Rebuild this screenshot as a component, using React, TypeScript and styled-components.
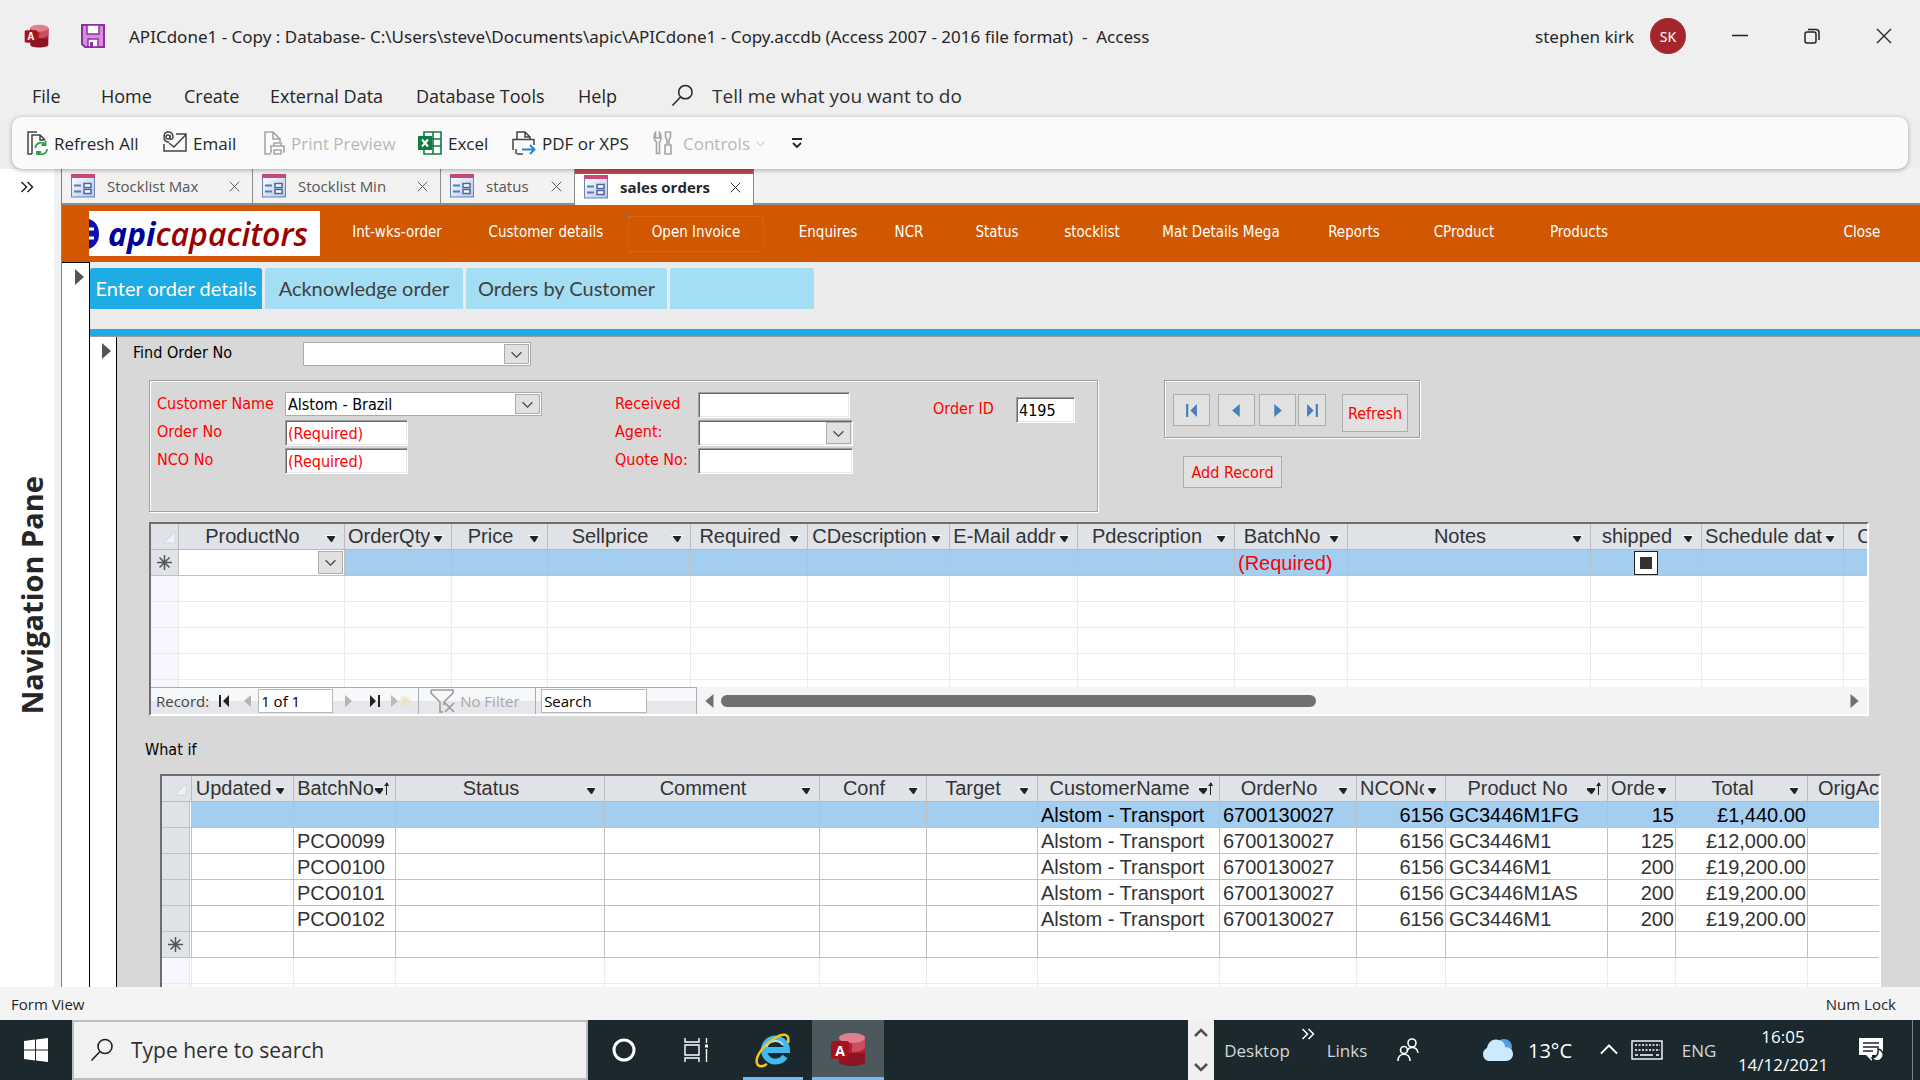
import React from "react";
import styled, { createGlobalStyle, css } from "styled-components";

const ui = `"Open Sans", "Noto Sans", sans-serif`;
const form = `"DejaVu Sans Condensed", "DejaVu Sans", sans-serif`;
const sheet = `"Liberation Sans", Arial, sans-serif`;

const Global = createGlobalStyle`
  * { box-sizing: border-box; }
  html, body { margin: 0; }
  body { font-family: ${ui}; color: #262626; background: #efefef; }
  button, input, select { font: inherit; color: inherit; margin: 0; border-radius: 0; }
  button { background: none; border: 0; padding: 0; cursor: pointer; white-space: nowrap; }
  a { color: inherit; text-decoration: none; }
  svg { display: block; flex: none; }
`;

const Window = styled.div`
  display: flex;
  flex-direction: column;
  height: 100vh;
  overflow: hidden;
`;

/* ---------- title bar and ribbon ---------- */

const TitleBar = styled.header`
  display: flex;
  align-items: center;
  flex: none;
  height: 72px;
  padding-left: 24px;
  font-family: "Noto Sans", "Open Sans", sans-serif;
  font-size: 17px;
`;
const SaveButton = styled.button`
  margin: 0 24px 0 32px;
`;
const Title = styled.h1`
  margin: 0;
  font-size: 17px;
  font-weight: 400;
  white-space: pre;
`;
const Account = styled.div`
  display: flex;
  align-items: center;
  gap: 16px;
  margin-left: auto;
  margin-right: 18px;
`;
const Avatar = styled.span`
  display: grid;
  place-items: center;
  width: 36px;
  height: 36px;
  border-radius: 50%;
  background: #a4262c;
  color: #fff;
  font-size: 14px;
`;
const WindowButton = styled.button`
  display: grid;
  place-items: center;
  width: 72px;
  height: 48px;
`;

const MenuBar = styled.nav`
  display: flex;
  align-items: center;
  flex: none;
  height: 45px;
  padding: 2px 0 0 32px;
  font-size: 18px;
`;
const MenuItem = styled.button<{ $w: number }>`
  width: ${(p) => p.$w}px;
  text-align: left;
`;
const TellMe = styled.label`
  display: flex;
  align-items: center;
  gap: 18px;
  font-size: 19px;
`;
const PlainInput = styled.input`
  border: 0;
  outline: 0;
  padding: 0;
  background: transparent;
  width: 340px;
  &::placeholder { color: #303030; opacity: 1; }
`;

const Ribbon = styled.div`
  display: flex;
  align-items: center;
  flex: none;
  height: 52px;
  margin: 0 12px;
  padding-left: 15px;
  border-radius: 10px;
  background: #fafafa;
  box-shadow: 0 1px 5px rgba(0, 0, 0, 0.32);
  font-size: 17px;
  position: relative;
  z-index: 1;
`;
const RibbonButton = styled.button<{ $w: number }>`
  display: flex;
  align-items: center;
  gap: 6px;
  width: ${(p) => p.$w}px;
  &:disabled { color: #b8b8b8; }
`;

/* ---------- workspace ---------- */

const Workspace = styled.main`
  display: flex;
  flex: 1;
  min-height: 0;
  background: #fff;
`;
const NavPane = styled.aside`
  display: flex;
  flex-direction: column;
  flex: none;
  width: 61px;
  border-right: 7px solid #f0f1f3;
`;
const PaneToggle = styled.button`
  height: 36px;
  display: grid;
  place-items: center;
`;
const PaneTitle = styled.h2`
  writing-mode: vertical-rl;
  transform: rotate(180deg);
  margin: auto 0 auto 13px;
  padding-top: 2px;
  font-size: 29px;
  line-height: 38px;
  font-weight: 700;
  white-space: nowrap;
`;
const Documents = styled.div`
  display: flex;
  flex-direction: column;
  flex: 1;
  min-width: 0;
  border-left: 1px solid #80858c;
`;
const DocTabs = styled.div`
  display: flex;
  flex: none;
  height: 36px;
  background: #f3f2f1;
  border-bottom: 2px solid #8a8f96;
`;
const DocTab = styled.div<{ $w: number; $on?: boolean }>`
  display: flex;
  align-items: center;
  width: ${(p) => p.$w}px;
  padding: 0 12px 0 9px;
  border-right: 1px solid #8a8f96;
  font-size: 15px;
  color: #555;
  ${(p) =>
    p.$on &&
    css`
      height: 36px;
      background: #fff;
      border-top: 5px solid #bc4b52;
      padding-bottom: 5px;
      color: #262626;
      font-weight: 700;
    `}
`;
const TabName = styled.button`
  flex: 1;
  padding-left: 12px;
  text-align: left;
  font-weight: inherit;
`;

const Banner = styled.nav`
  display: grid;
  grid-template-columns: 258px 154px 144px 156px 108px 54px 122px 68px 190px 76px 144px 86px 1fr 116px;
  align-items: center;
  flex: none;
  height: 57px;
  background: #d15700;
  color: #fff;
  font-family: ${form};
  font-size: 15px;
`;
const Logo = styled.div`
  display: flex;
  align-items: center;
  width: 231px;
  height: 45px;
  margin-left: 27px;
  background: #fff;
  font: italic 600 32px/40px "Open Sans", "Noto Sans", sans-serif;
  color: #990000;
  overflow: hidden;
`;
const LogoBlue = styled.span`
  color: #00009c;
  font-weight: 700;
  margin-left: 8px;
`;
const BannerButton = styled.button<{ $focus?: boolean }>`
  justify-self: center;
  height: 36px;
  padding-bottom: 4px;
  ${(p) =>
    p.$focus &&
    css`
      width: 136px;
      border: 1px dotted #3d9bd0;
    `}
`;

const MainForm = styled.div`
  display: flex;
  flex: 1;
  min-height: 0;
`;
const Selector = styled.div<{ $w: number; $top?: boolean }>`
  flex: none;
  width: ${(p) => p.$w}px;
  padding: 6px 5px 0 0;
  display: flex;
  align-items: flex-start;
  justify-content: flex-end;
  background: #fff;
  border-right: 1px solid #000;
  border-top: ${(p) => (p.$top ? "1px solid #000" : "0")};
`;
const Column = styled.div`
  display: flex;
  flex-direction: column;
  flex: 1;
  min-width: 0;
  min-height: 0;
`;
const FormTabs = styled.div`
  display: flex;
  gap: 3px;
  flex: none;
  height: 75px;
  padding-top: 6px;
  background: #ebebeb;
  border-bottom: 1px solid #9c9c9c;
  box-shadow: inset 0 -7px #1eace5;
`;
const FormTab = styled.button<{ $w: number; $on?: boolean }>`
  width: ${(p) => p.$w}px;
  height: 41px;
  padding-bottom: 2px;
  border-radius: 3px 3px 0 0;
  background: ${(p) => (p.$on ? "#1eace5" : "#a4def4")};
  color: ${(p) => (p.$on ? "#fff" : "#404040")};
  font: 20px/24px Lato, "Open Sans", sans-serif;
`;
const Detail = styled.div`
  display: flex;
  flex-direction: column;
  flex: 1;
  min-width: 0;
  min-height: 0;
  padding: 5px 39px 0 32px;
  background: #d8d8d8;
  font-family: ${form};
  font-size: 16px;
  color: #000;
`;

/* ---------- form controls ---------- */

const FindRow = styled.div`
  display: flex;
  flex: none;
  margin-left: -16px;
  height: 24px;
`;
const Label = styled.label<{ $w: number; $red?: boolean }>`
  width: ${(p) => p.$w}px;
  line-height: ${(p) => (p.$red ? 23 : 21)}px;
  white-space: nowrap;
  color: ${(p) => (p.$red ? "#f00" : "#000")};
`;
const sunken = css`
  border: 1px solid;
  border-color: #a0a0a0 #fff #fff #a0a0a0;
  box-shadow: inset 1px 1px #696969, inset -1px -1px #e8e8e8;
`;
const ComboBox = styled.div<{ $w: number; $flat?: boolean }>`
  position: relative;
  width: ${(p) => p.$w}px;
  height: ${(p) => (p.$flat ? 24 : 26)}px;
  background: #fff;
  ${(p) => (p.$flat ? "border: 1px solid #ababb5;" : sunken)}
  select {
    appearance: none;
    display: block;
    width: 100%;
    height: 100%;
    padding: 0 28px 0 2px;
    border: 0;
    outline: 0;
    background: transparent;
  }
`;
const ComboArrow = styled.span`
  position: absolute;
  top: 1px;
  right: 1px;
  bottom: 1px;
  width: 25px;
  display: grid;
  place-items: center;
  background: #e1e1e1;
  border: 1px solid #adadad;
  color: #444;
  pointer-events: none;
`;
const TextBox = styled.input<{ $w: number; $red?: boolean }>`
  width: ${(p) => p.$w}px;
  height: 26px;
  padding: 0 2px;
  outline: 0;
  background: #fff;
  ${sunken}
  color: ${(p) => (p.$red ? "#f00" : "#000")};
`;
const TopRow = styled.div`
  display: flex;
  flex: none;
  gap: 66px;
  margin-top: 14px;
`;
const etched = css`
  border: 1px solid #a0a0a0;
  box-shadow: inset 1px 1px #fff, 1px 1px #fff;
`;
const OrderPanel = styled.section`
  display: flex;
  width: 949px;
  height: 132px;
  padding: 11px 7px;
  ${etched}
`;
const FieldGroup = styled.div<{ $w: number; $low?: boolean }>`
  display: flex;
  flex-direction: column;
  gap: 2px;
  width: ${(p) => p.$w}px;
  padding-top: ${(p) => (p.$low ? 5 : 0)}px;
`;
const Field = styled.div`
  display: flex;
  height: 26px;
`;
const Actions = styled.div`
  display: flex;
  flex-direction: column;
  align-items: flex-start;
`;
const RecordPanel = styled.div`
  display: flex;
  align-items: flex-start;
  width: 256px;
  height: 58px;
  padding: 13px 8px;
  ${etched}
`;
const FormButton = styled.button<{ $w: number; $h: number; $gap?: number }>`
  display: grid;
  place-items: center;
  width: ${(p) => p.$w}px;
  height: ${(p) => p.$h}px;
  margin-right: ${(p) => p.$gap || 0}px;
  background: #e1e1e1;
  border: 1px solid #adadad;
  color: #f00;
`;
const AddRow = styled.div`
  padding: 18px 19px 0;
`;

/* ---------- datasheets ---------- */

const SheetFrame = styled.section<{ $fill?: boolean }>`
  display: flex;
  flex-direction: column;
  min-width: 0;
  background: #fff;
  border: 2px solid;
  border-color: #6e6e6e #fff #fff #6e6e6e;
  ${(p) =>
    p.$fill
      ? "flex: 1; min-height: 0; margin-left: 11px; border-bottom: 0;"
      : "flex: none; margin: 10px 12px 0 0;"}
`;
const SheetView = styled.div<{ $h?: number }>`
  overflow: hidden;
  ${(p) => (p.$h ? `height: ${p.$h}px;` : "flex: 1; min-height: 0;")}
`;
const Sheet = styled.table<{ $w: number }>`
  table-layout: fixed;
  width: ${(p) => p.$w}px;
  border-collapse: separate;
  border-spacing: 0;
  font-family: ${sheet};
  font-size: 20px;
  line-height: 25px;
  color: #333;
`;
const Col = styled.col<{ $w: number }>`
  width: ${(p) => p.$w}px;
`;
const Row = styled.tr<{ $kind?: "current" | "empty" }>`
  height: 26px;
  line-height: 23px;
  color: ${(p) => (p.$kind === "current" ? "#000" : "#333")};
  background: ${(p) => (p.$kind === "current" ? "#a4cef0" : "#fff")};
  --line: ${(p) => (p.$kind === "empty" ? "#ebebeb" : "#c0c0c0")};
`;
const HeadCell = styled.th`
  height: 26px;
  padding: 0;
  font-weight: 400;
  background: #dfe2e7;
  border: solid #b8bcc2;
  border-width: 0 1px 1px 0;
`;
const HeadInner = styled.div`
  display: flex;
  align-items: center;
  height: 25px;
  padding: 0 5px 0 3px;
`;
const HeadText = styled.span`
  flex: 1;
  min-width: 0;
  overflow: hidden;
  white-space: nowrap;
  text-align: center;
`;
const Cell = styled.td<{ $num?: boolean; $red?: boolean }>`
  height: 26px;
  padding: 2px 1px 0 3px;
  overflow: hidden;
  white-space: nowrap;
  text-align: ${(p) => (p.$num ? "right" : "left")};
  border: solid var(--line);
  border-width: 0 1px 1px 0;
  ${(p) => p.$red && "color: #f00;"}
`;
const RowHead = styled.th<{ $blank?: boolean }>`
  height: 26px;
  padding: 0;
  background: ${(p) => (p.$blank ? "#f7f7ff" : "#dfe2e7")};
  border: solid var(--line);
  border-width: 0 1px 1px 0;
  svg { margin: 0 auto; }
`;
const ComboCell = styled.td`
  height: 26px;
  padding: 0;
  background: #fff;
  border: solid var(--line);
  border-width: 0 1px 1px 0;
`;
const CellCombo = styled(ComboBox)`
  border: 0;
  box-shadow: none;
  height: 25px;
`;
const CheckCell = styled(Cell)`
  padding: 0;
`;
const CheckBox = styled.input`
  appearance: none;
  display: block;
  width: 24px;
  height: 24px;
  margin: 0 auto;
  border: 1px solid #222;
  background: #333 content-box;
  padding: 5px;
  box-shadow: inset 0 0 0 5px #fff;
`;
const RecordBar = styled.div`
  display: flex;
  height: 27px;
  background: #f4f4f4;
  font-family: ${ui};
  font-size: 15px;
  color: #444;
`;
const RecordNav = styled.div`
  display: flex;
  align-items: center;
  flex: none;
  width: 546px;
  border: solid #a9adb3;
  border-width: 1px 1px 0 0;
  background: linear-gradient(#f7f8f9 50%, #e6e7eb 50%);
  padding-left: 5px;
`;
const NavIcon = styled.button<{ $w: number }>`
  display: grid;
  place-items: center;
  width: ${(p) => p.$w}px;
  height: 24px;
`;
const BarInput = styled.input<{ $w: number }>`
  width: ${(p) => p.$w}px;
  height: 24px;
  padding: 0 2px;
  border: 1px solid #b5b8bd;
  background: #fff;
  color: #000;
  &::placeholder { color: #000; opacity: 1; }
`;
const FilterButton = styled.button`
  display: flex;
  align-items: center;
  gap: 4px;
  width: 118px;
  height: 26px;
  margin: 0 5px 0 4px;
  padding-left: 11px;
  border: solid #a9adb3;
  border-width: 0 1px;
  &:disabled { color: #a6a8ac; }
`;
const Scroll = styled.div`
  display: flex;
  align-items: center;
  flex: 1;
  padding: 0 6px;
  gap: 4px;
`;
const Track = styled.div`
  flex: 1;
`;
const Thumb = styled.div`
  width: 53%;
  height: 12px;
  border-radius: 6px;
  background: #707070;
`;
const WhatIf = styled.h3`
  flex: none;
  margin: 0 -4px;
  padding-top: 23px;
  height: 58px;
  font-size: 16px;
  line-height: 21px;
  font-weight: 400;
`;

/* ---------- status bar and taskbar ---------- */

const StatusBar = styled.footer`
  display: flex;
  align-items: center;
  justify-content: space-between;
  flex: none;
  height: 33px;
  padding: 0 24px 0 11px;
  background: #f4f4f4;
  font-size: 15px;
`;
const Taskbar = styled.footer`
  display: flex;
  align-items: stretch;
  flex: none;
  height: 60px;
  background: #1b292e;
  color: #fff;
  font-size: 17px;
`;
const TaskButton = styled.button<{ $w: number; $on?: boolean }>`
  display: grid;
  place-items: center;
  width: ${(p) => p.$w}px;
  ${(p) => p.$on && "background: #4c585c;"}
`;
const Running = styled(TaskButton)`
  box-shadow: inset 0 -3px #76b9ed;
`;
const TaskGap = styled.span<{ $w: number }>`
  width: ${(p) => p.$w}px;
`;
const SearchBox = styled.label`
  display: flex;
  align-items: center;
  gap: 17px;
  width: 516px;
  padding-left: 16px;
  background: #f2f2f2;
  border: 2px solid #bdbdbd;
  color: #222;
  font-size: 21px;
`;
const Spinner = styled.div`
  display: flex;
  flex-direction: column;
  justify-content: space-between;
  width: 26px;
  margin-left: auto;
  padding: 8px 5px;
  background: #f0f0f0;
`;
const TrayText = styled.button<{ $w: number }>`
  width: ${(p) => p.$w}px;
  color: #d4d7d8;
`;
const More = styled.button`
  align-self: flex-start;
  width: 26px;
  padding: 8px 1px;
`;
const Weather = styled.button`
  display: flex;
  align-items: center;
  gap: 14px;
  width: 106px;
  margin-left: 32px;
  font-size: 20px;
`;
const Clock = styled.time`
  width: 96px;
  padding-top: 3px;
  line-height: 28px;
  text-align: center;
`;
const ShowDesktop = styled.button`
  width: 8px;
  margin-left: 1px;
  border-left: 1px solid #7b8487;
`;

/* ---------- icons ---------- */

const AccessIcon = ({ size }: { size: number }) => (
  <svg width={size} height={size} viewBox="0 0 36 36">
    <path d="M9 6v24c0 2.500 5.800 4 13 4s13-1.500 13-4V6z" fill="#8b1621" />
    <path d="M9 6v15h26V6z" fill="#b3202f" />
    <path d="M22 6h13v9c0 3-6 5-13 5z" fill="#c94f60" />
    <ellipse cx="22" cy="6" rx="13" ry="5" fill="#e07f8e" />
    <rect x="1" y="9" width="18" height="18" rx="2" fill="#a4121f" />
    <text x="10" y="23.500" textAnchor="middle" fontFamily="Open Sans" fontWeight="700" fontSize="14" fill="#fff">A</text>
  </svg>
);
const SaveIcon = () => (
  <svg width="24" height="24" viewBox="0 0 24 24">
    <path d="M1 1h22v22H4l-3-3z" fill="#d58ddc" stroke="#8d2fa0" strokeWidth="2" />
    <path d="M6 1h12v9H6z" fill="#fff" stroke="#8d2fa0" strokeWidth="1.500" />
    <path d="M7 23v-8h10v8z" fill="#fff" stroke="#8d2fa0" strokeWidth="1.500" />
    <path d="M9 18h3v5H9z" fill="#8d2fa0" />
  </svg>
);
const Glass = ({ size }: { size: number }) => (
  <svg width={size} height={size} viewBox="0 0 24 24" fill="none" stroke="currentColor" strokeWidth="1.600">
    <circle cx="15" cy="8.500" r="7" />
    <path d="M10 13.500L1.500 22.500" />
  </svg>
);
const Chevron = ({ size = 10, up }: { size?: number; up?: boolean }) => (
  <svg width={size} height={size} viewBox="0 0 10 10" fill="none" stroke="currentColor" strokeWidth="1.100">
    <path d={up ? "M0.500 7L5 2.500L9.500 7" : "M0.500 3L5 7.500L9.500 3"} />
  </svg>
);
const DoubleChevron = () => (
  <svg width="14" height="12" viewBox="0 0 14 12" fill="none" stroke="currentColor" strokeWidth="1.500">
    <path d="M1.500 1l5 5-5 5M7.500 1l5 5-5 5" />
  </svg>
);
const Cross = ({ size }: { size: number }) => (
  <svg width={size} height={size} viewBox="0 0 16 16" stroke="currentColor" strokeWidth="1.400">
    <path d="M1 1l14 14M15 1L1 15" />
  </svg>
);
const FormIcon = () => (
  <svg width="24" height="24" viewBox="0 0 24 24">
    <defs>
      <linearGradient id="sheetFill" x1="0" y1="0" x2="1" y2="1">
        <stop offset="0" stopColor="#fff" />
        <stop offset="1" stopColor="#b4c6ea" />
      </linearGradient>
    </defs>
    <rect x="0.500" y="1" width="23" height="22" fill="url(#sheetFill)" stroke="#6d83b4" />
    <rect x="0" y="0" width="24" height="4" fill="#c8487a" />
    <path d="M3 11.500h7M3 17.500h7" stroke="#5b79b8" strokeWidth="2" />
    <rect x="13" y="9.500" width="7" height="4" fill="#fff" stroke="#4c669e" strokeWidth="1.500" />
    <rect x="13" y="15.500" width="7" height="4" fill="#fff" stroke="#4c669e" strokeWidth="1.500" />
  </svg>
);
const RefreshIcon = () => (
  <svg width="21" height="24" viewBox="0 0 21 24" fill="none" strokeWidth="1.500">
    <path d="M5 23H1V1h9M5 23V4h8l5 5M13 4v5h5" stroke="#444" />
    <path d="M8.500 17a5.500 5.500 0 0110-3M18.500 10v4h-4M20 18a5.500 5.500 0 01-10 3M10 24.500V21h4" stroke="#2f9e4b" strokeWidth="1.800" />
  </svg>
);
const MailIcon = () => (
  <svg width="24" height="24" viewBox="0 0 24 24" fill="none" stroke="#444" strokeWidth="1.500">
    <path d="M13 3h10v17H1v-7M23 3.500L11 16l-5-4" />
    <circle cx="5" cy="6" r="2" />
    <path d="M7 4v3c0 2 3 2 3-1 0-3-2-5-5-5S1 3 1 6s2 5 5 5" />
  </svg>
);
const PrintIcon = () => (
  <svg width="21" height="24" viewBox="0 0 21 24" fill="none" stroke="#a6a6a6" strokeWidth="1.600">
    <path d="M7 23H1V1h8l7 7v3M9 1v7h7" />
    <path d="M10 15v-3h7v3M8 21H7v-6h13v6h-1M10 19h7v4h-7z" />
  </svg>
);
const ExcelIcon = () => (
  <svg width="24" height="24" viewBox="0 0 24 24">
    <path d="M6 1h17v22H6z" fill="#fff" stroke="#107c41" strokeWidth="1.600" />
    <path d="M6 8h17M6 15h17M15 1v22" stroke="#107c41" strokeWidth="1.600" />
    <rect x="0" y="5" width="14" height="14" fill="#107c41" />
    <path d="M4 8.500l6 7M10 8.500l-6 7" stroke="#fff" strokeWidth="2" />
  </svg>
);
const PdfIcon = () => (
  <svg width="24" height="24" viewBox="0 0 24 24" fill="none" stroke="#444" strokeWidth="1.500">
    <path d="M5 8V1h8l5 5v2M13 1v5h5M5 23h6M1 19V8.500h21V14M4 18v5" />
    <path d="M10 18.500h12M18 14l4.500 4.500L18 23" stroke="#1e83d0" strokeWidth="1.800" />
  </svg>
);
const ToolsIcon = () => (
  <svg width="24" height="24" viewBox="0 0 24 24" fill="none" stroke="#a6a6a6" strokeWidth="1.600">
    <path d="M3.500 22.500V11C1 9.500 0 5 2.500 1.500V7h4V1.500C9 5 8 9.500 6.500 11v11.500z" />
    <path d="M12.500 1h5v5l-1.500 3v5h2v9h-6v-9h2V9l-1.500-3z" />
  </svg>
);
const Arrow = ({ dir, bar, color = "#222", size = 12 }: { dir: "l" | "r"; bar?: boolean; color?: string; size?: number }) => (
  <svg width={size} height={size} viewBox="0 0 12 12" fill={color}>
    <path d={dir === "l" ? (bar ? "M11 0v12L5 6zM1 0h2v12H1z" : "M9 0v12L2 6z") : bar ? "M1 0v12l6-6zM9 0h2v12H9z" : "M3 0v12l7-6z"} />
  </svg>
);
const SheetArrow = ({ sorted }: { sorted?: boolean }) => (
  <svg width="16" height="14" viewBox="0 0 16 14">
    <path d={sorted ? "M0 5.500h10" : "M2 5.500h12"} stroke="#fff" />
    <path d={sorted ? "M1 6h8v2L6 12H5L1 8z" : "M4 6h8v1L9 12H8L4 7z"} fill="#222" />
    {sorted && <path d="M12 13V4h-2l3-4 2 4h-2v9z" fill="#222" />}
  </svg>
);
const Star = () => (
  <svg width="15" height="15" viewBox="0 0 15 15" stroke="#555" strokeWidth="1.500">
    <path d="M7.500 0v15M0 7.500h15M2.500 2.500l10 10M12.500 2.500l-10 10" />
  </svg>
);
const Corner = () => (
  <svg width="22" height="14" viewBox="0 0 22 14">
    <path d="M21 2v11H10z" fill="#eef1f6" stroke="#c0c6d0" strokeWidth="0.500" />
  </svg>
);
const RecordMark = () => (
  <svg width="9" height="16" viewBox="0 0 9 16">
    <path d="M0 0l9 8-9 8z" fill="#555" />
  </svg>
);

/* ---------- data ---------- */

const banner = ["Int-wks-order", "Customer details", "Open Invoice", "Enquires", "NCR", "Status", "stocklist", "Mat Details Mega", "Reports", "CProduct", "Products"];

const lineCols: [string, number][] = [
  ["ProductNo", 166], ["OrderQty", 107], ["Price", 96], ["Sellprice", 143], ["Required", 117],
  ["CDescription", 142], ["E-Mail addr", 128], ["Pdescription", 157], ["BatchNo", 113],
  ["Notes", 243], ["shipped", 111], ["Schedule dat", 142], ["C", 60],
];
const batchCols: [string, number, boolean?][] = [
  ["Updated", 102], ["BatchNo", 102, true], ["Status", 209], ["Comment", 215], ["Conf", 107],
  ["Target", 111], ["CustomerName", 182, true], ["OrderNo", 137], ["NCONo", 89],
  ["Product No", 162, true], ["Orde", 68], ["Total", 132], ["OrigAc", 100],
];
const batches = [
  ["", "GC3446M1FG", "15", "£1,440.00"],
  ["PCO0099", "GC3446M1", "125", "£12,000.00"],
  ["PCO0100", "GC3446M1", "200", "£19,200.00"],
  ["PCO0101", "GC3446M1AS", "200", "£19,200.00"],
  ["PCO0102", "GC3446M1", "200", "£19,200.00"],
];
const total = (cols: [string, number, boolean?][], first: number) => cols.reduce((s, c) => s + c[1], first);

const Combo = ({ id, w, value, flat }: { id: string; w: number; value: string; flat?: boolean }) => (
  <ComboBox $w={w} $flat={flat}>
    <select id={id} defaultValue={value}>
      <option>{value}</option>
    </select>
    <ComboArrow><Chevron size={11} /></ComboArrow>
  </ComboBox>
);

const Heads = ({ cols }: { cols: [string, number, boolean?][] }) => (
  <>
    {cols.map(([name, , sorted]) => (
      <HeadCell key={name} scope="col">
        <HeadInner>
          <HeadText>{name}</HeadText>
          <SheetArrow sorted={sorted} />
        </HeadInner>
      </HeadCell>
    ))}
  </>
);

const BlankRows = ({ cols, count, gap }: { cols: [string, number, boolean?][]; count: number; gap?: boolean }) => (
  <>
    {Array.from({ length: count }, (_, i) => (
      <Row key={i} $kind="empty">
        <RowHead $blank />
        {gap && <ComboCell />}
        {cols.map(([name]) => <Cell key={name} />)}
      </Row>
    ))}
  </>
);

const OrderLines = () => (
  <SheetFrame>
    <SheetView $h={163}>
      <Sheet $w={total(lineCols, 28)}>
        <colgroup>
          <Col $w={28} />
          {lineCols.map(([n, w]) => <Col key={n} $w={w} />)}
        </colgroup>
        <thead>
          <tr>
            <HeadCell><HeadInner><Corner /></HeadInner></HeadCell>
            <Heads cols={lineCols} />
          </tr>
        </thead>
        <tbody>
          <Row $kind="current">
            <RowHead><Star /></RowHead>
            <ComboCell>
              <CellCombo $w={165} $flat>
                <select aria-label="ProductNo" />
                <ComboArrow><Chevron size={11} /></ComboArrow>
              </CellCombo>
            </ComboCell>
            {lineCols.slice(1).map(([n]) =>
              n === "shipped" ? (
                <CheckCell key={n}><CheckBox type="checkbox" aria-label="shipped" /></CheckCell>
              ) : (
                <Cell key={n} $red>{n === "BatchNo" ? "(Required)" : ""}</Cell>
              )
            )}
          </Row>
          <BlankRows cols={lineCols} count={5} />
        </tbody>
      </Sheet>
    </SheetView>
    <RecordBar>
      <RecordNav>
        <span>Record:</span>
        <NavIcon $w={29} aria-label="First record"><Arrow dir="l" bar /></NavIcon>
        <NavIcon $w={20} aria-label="Previous record"><Arrow dir="l" color="#b4b4b4" /></NavIcon>
        <BarInput $w={75} aria-label="Current record" defaultValue="1 of 1" />
        <NavIcon $w={29} aria-label="Next record"><Arrow dir="r" color="#b4b4b4" /></NavIcon>
        <NavIcon $w={26} aria-label="Last record"><Arrow dir="r" bar /></NavIcon>
        <NavIcon $w={26} aria-label="New record">
          <svg width="20" height="14" viewBox="0 0 20 14">
            <path d="M0 1l7 6-7 6z" fill="#bcbcbc" />
            <path d="M14 1v12M8 7h12M10 3l8 8M18 3l-8 8" stroke="#f0dfc0" strokeWidth="1.500" />
          </svg>
        </NavIcon>
        <FilterButton disabled>
          <svg width="26" height="24" viewBox="0 0 26 24" fill="none" stroke="#9a9a9a" strokeWidth="1.600">
            <path d="M1 1h22v3l-9 9v3M1 1v3l9 9v10h3M15 14l9 9M24 14l-9 9" />
          </svg>
          No Filter
        </FilterButton>
        <BarInput $w={106} aria-label="Search records" placeholder="Search" />
      </RecordNav>
      <Scroll>
        <Arrow dir="l" color="#707070" size={14} />
        <Track><Thumb /></Track>
        <Arrow dir="r" color="#707070" size={14} />
      </Scroll>
    </RecordBar>
  </SheetFrame>
);

const WhatIfSheet = () => (
  <SheetFrame $fill>
    <SheetView>
      <Sheet $w={total(batchCols, 30)}>
        <colgroup>
          <Col $w={28} />
          <Col $w={2} />
          {batchCols.map(([n, w]) => <Col key={n} $w={w} />)}
        </colgroup>
        <thead>
          <tr>
            <HeadCell colSpan={2}><HeadInner><Corner /></HeadInner></HeadCell>
            <Heads cols={batchCols} />
          </tr>
        </thead>
        <tbody>
          {batches.map(([batch, product, qty, sum], i) => (
            <Row key={i} $kind={i === 0 ? "current" : undefined}>
              <RowHead />
              <ComboCell />
              <Cell />
              <Cell>{batch}</Cell>
              <Cell />
              <Cell />
              <Cell />
              <Cell />
              <Cell>Alstom - Transport</Cell>
              <Cell>6700130027</Cell>
              <Cell $num>6156</Cell>
              <Cell>{product}</Cell>
              <Cell $num>{qty}</Cell>
              <Cell $num>{sum}</Cell>
              <Cell />
            </Row>
          ))}
          <Row>
            <RowHead><Star /></RowHead>
            <ComboCell />
            {batchCols.map(([n]) => <Cell key={n} />)}
          </Row>
          <BlankRows cols={batchCols} count={2} gap />
        </tbody>
      </Sheet>
    </SheetView>
  </SheetFrame>
);

const docs: [string, number][] = [["Stocklist Max", 191], ["Stocklist Min", 188], ["status", 134], ["sales orders", 179]];

export default function App() {
  return (
    <Window>
      <Global />
      <TitleBar>
        <AccessIcon size={25} />
        <SaveButton aria-label="Save"><SaveIcon /></SaveButton>
        <Title>{"APICdone1 - Copy : Database- C:\\Users\\steve\\Documents\\apic\\APICdone1 - Copy.accdb (Access 2007 - 2016 file format)  -  Access"}</Title>
        <Account>stephen kirk<Avatar>SK</Avatar></Account>
        <WindowButton aria-label="Minimize">
          <svg width="16" height="16" viewBox="0 0 16 16" stroke="#222" strokeWidth="1.500"><path d="M0 7.500h16" /></svg>
        </WindowButton>
        <WindowButton aria-label="Restore">
          <svg width="16" height="16" viewBox="0 0 16 16" fill="none" stroke="#222" strokeWidth="1.500">
            <rect x="1" y="4" width="11" height="11" rx="2" />
            <path d="M4 1.500h8a3 3 0 013 3V12" />
          </svg>
        </WindowButton>
        <WindowButton aria-label="Close"><Cross size={16} /></WindowButton>
      </TitleBar>

      <MenuBar>
        <MenuItem $w={69}>File</MenuItem>
        <MenuItem $w={83}>Home</MenuItem>
        <MenuItem $w={86}>Create</MenuItem>
        <MenuItem $w={146}>External Data</MenuItem>
        <MenuItem $w={162}>Database Tools</MenuItem>
        <MenuItem $w={93}>Help</MenuItem>
        <TellMe>
          <Glass size={23} />
          <PlainInput aria-label="Tell me" placeholder="Tell me what you want to do" />
        </TellMe>
      </MenuBar>

      <Ribbon>
        <RibbonButton $w={136}><RefreshIcon />Refresh All</RibbonButton>
        <RibbonButton $w={101}><MailIcon />Email</RibbonButton>
        <RibbonButton $w={154} disabled><PrintIcon />Print Preview</RibbonButton>
        <RibbonButton $w={94}><ExcelIcon />Excel</RibbonButton>
        <RibbonButton $w={141}><PdfIcon />PDF or XPS</RibbonButton>
        <RibbonButton $w={138} disabled><ToolsIcon />Controls<Chevron size={9} /></RibbonButton>
        <RibbonButton $w={24} aria-label="More commands">
          <svg width="12" height="12" viewBox="0 0 12 12" fill="none" stroke="#222" strokeWidth="1.800"><path d="M1 2h10M2 6l4 4 4-4" /></svg>
        </RibbonButton>
      </Ribbon>

      <Workspace>
        <NavPane>
          <PaneToggle aria-label="Open pane"><DoubleChevron /></PaneToggle>
          <PaneTitle>Navigation Pane</PaneTitle>
        </NavPane>
        <Documents>
          <DocTabs>
            {docs.map(([name, w], i) => (
              <DocTab key={name} $w={w} $on={i === 3}>
                <FormIcon />
                <TabName>{name}</TabName>
                <button aria-label={`Close ${name}`}><Cross size={11} /></button>
              </DocTab>
            ))}
          </DocTabs>
          <Banner>
            <Logo>
              <svg width="11" height="34" viewBox="0 0 11 34">
                <path d="M0 2c7 2 10 8 10 15S7 29 0 32z" fill="#1010b0" />
                <path d="M0 12h5M0 21h5" stroke="#fff" strokeWidth="3" />
              </svg>
              <LogoBlue>api</LogoBlue>capacitors
            </Logo>
            {banner.map((name) => (
              <BannerButton key={name} $focus={name === "Open Invoice"}>{name}</BannerButton>
            ))}
            <span />
            <BannerButton>Close</BannerButton>
          </Banner>
          <MainForm>
            <Selector $w={28} $top><RecordMark /></Selector>
            <Column>
              <FormTabs>
                <FormTab $w={172} $on>Enter order details</FormTab>
                <FormTab $w={198}>Acknowledge order</FormTab>
                <FormTab $w={201}>Orders by Customer</FormTab>
                <FormTab $w={144} aria-label="Blank tab" />
              </FormTabs>
              <MainForm>
                <Selector $w={27}><RecordMark /></Selector>
                <Detail>
                  <FindRow>
                    <Label $w={170} htmlFor="find">Find Order No</Label>
                    <Combo id="find" w={228} value="" flat />
                  </FindRow>
                  <TopRow>
                    <OrderPanel>
                      <FieldGroup $w={458}>
                        <Field><Label $w={128} $red htmlFor="customer">Customer Name</Label><Combo id="customer" w={257} value="Alstom - Brazil" flat /></Field>
                        <Field><Label $w={128} $red htmlFor="order">Order No</Label><TextBox $w={123} $red id="order" defaultValue="(Required)" /></Field>
                        <Field><Label $w={128} $red htmlFor="nco">NCO No</Label><TextBox $w={123} $red id="nco" defaultValue="(Required)" /></Field>
                      </FieldGroup>
                      <FieldGroup $w={318}>
                        <Field><Label $w={83} $red htmlFor="received">Received</Label><TextBox $w={152} id="received" /></Field>
                        <Field><Label $w={83} $red htmlFor="agent">Agent:</Label><Combo id="agent" w={155} value="" /></Field>
                        <Field><Label $w={83} $red htmlFor="quote">Quote No:</Label><TextBox $w={155} id="quote" /></Field>
                      </FieldGroup>
                      <FieldGroup $w={142} $low>
                        <Field><Label $w={83} $red htmlFor="orderid">Order ID</Label><TextBox $w={59} id="orderid" defaultValue="4195" /></Field>
                      </FieldGroup>
                    </OrderPanel>
                    <Actions>
                      <RecordPanel>
                        <FormButton $w={37} $h={32} $gap={8} aria-label="First"><Arrow dir="l" bar color="#4a7ebb" size={13} /></FormButton>
                        <FormButton $w={37} $h={32} $gap={4} aria-label="Previous"><Arrow dir="l" color="#4a7ebb" size={13} /></FormButton>
                        <FormButton $w={37} $h={32} $gap={2} aria-label="Next"><Arrow dir="r" color="#4a7ebb" size={13} /></FormButton>
                        <FormButton $w={28} $h={32} $gap={16} aria-label="Last"><Arrow dir="r" bar color="#4a7ebb" size={13} /></FormButton>
                        <FormButton $w={66} $h={38}>Refresh</FormButton>
                      </RecordPanel>
                      <AddRow><FormButton $w={99} $h={32}>Add Record</FormButton></AddRow>
                    </Actions>
                  </TopRow>
                  <OrderLines />
                  <WhatIf>What if</WhatIf>
                  <WhatIfSheet />
                </Detail>
              </MainForm>
            </Column>
          </MainForm>
        </Documents>
      </Workspace>

      <StatusBar><span>Form View</span><span>Num Lock</span></StatusBar>

      <Taskbar>
        <TaskButton $w={72} aria-label="Start">
          <svg width="24" height="24" viewBox="0 0 24 24" fill="#fff"><path d="M0 3l11-1.500V11.500H0zM12 1.400L24 0v11.500H12zM0 12.500h11v10L0 21zM12 12.500h12V24l-12-1.500z" /></svg>
        </TaskButton>
        <SearchBox>
          <Glass size={24} />
          <PlainInput aria-label="Search" placeholder="Type here to search" />
        </SearchBox>
        <TaskButton $w={72} aria-label="Cortana">
          <svg width="24" height="24" viewBox="0 0 24 24" fill="none" stroke="#fff" strokeWidth="3"><circle cx="12" cy="12" r="10" /></svg>
        </TaskButton>
        <TaskButton $w={72} aria-label="Task view">
          <svg width="24" height="24" viewBox="0 0 24 24" fill="none" stroke="#fff" strokeWidth="1.400">
            <path d="M1 0v4h14V0M1 24v-4h14v4M1 7h14v10H1zM22.500 0v5M22.500 11v13" />
            <path d="M22.500 6.500v3" strokeWidth="3" />
          </svg>
        </TaskButton>
        <TaskGap $w={11} />
        <Running $w={60} aria-label="Internet Explorer">
          <svg width="36" height="36" viewBox="0 0 36 36" fill="none">
            <path d="M30 24.500a11.500 11.500 0 112-6.500H12" stroke="#3fb9ee" strokeWidth="6" />
            <path d="M11 15a10 10 0 0117-2" stroke="#a8e8fc" strokeWidth="2" />
            <path d="M33 11c2-10-5-10-13-5C8 13-2 27 3 33c2 2 6 1 9-1" stroke="#f5c518" strokeWidth="2.500" />
          </svg>
        </Running>
        <TaskGap $w={9} />
        <Running $w={72} $on aria-label="Access"><AccessIcon size={36} /></Running>
        <Spinner>
          <svg width="16" height="10" viewBox="0 0 16 10" fill="none" stroke="#505050" strokeWidth="2.500"><path d="M2 8l6-6 6 6" /></svg>
          <svg width="16" height="10" viewBox="0 0 16 10" fill="none" stroke="#505050" strokeWidth="2.500"><path d="M2 2l6 6 6-6" /></svg>
        </Spinner>
        <TrayText $w={86}>Desktop</TrayText>
        <More aria-label="More desktop items"><DoubleChevron /></More>
        <TrayText $w={42}>Links</TrayText>
        <TaskButton $w={80} aria-label="People">
          <svg width="24" height="24" viewBox="0 0 24 24" fill="none" stroke="#fff" strokeWidth="1.600">
            <circle cx="16" cy="5" r="4" /><path d="M11 13c2-5 10-5 11 2" />
            <circle cx="8" cy="12" r="3.500" /><path d="M2 23c0-9 12-9 12 0" />
          </svg>
        </TaskButton>
        <Weather>
          <svg width="34" height="24" viewBox="0 0 34 24">
            <circle cx="24" cy="9" r="8" fill="#4f9fe6" />
            <path d="M8 23a7 7 0 01-1-13C8 3 14 0 19 2c4 1 6 4 6 7 5 0 8 3 8 7s-3 7-7 7z" fill="#cdeafd" />
          </svg>
          13°C
        </Weather>
        <TaskButton $w={45} aria-label="Hidden icons"><Chevron size={18} up /></TaskButton>
        <TaskButton $w={32} aria-label="Keyboard">
          <svg width="32" height="20" viewBox="0 0 32 20" fill="none" stroke="#fff" strokeWidth="1.400">
            <rect x="1" y="1" width="30" height="18" />
            <path d="M4 5h25M4 10h25" strokeDasharray="2 1.500" />
            <path d="M4 15h3M9 15h13M25 15h3" />
          </svg>
        </TaskButton>
        <TrayText $w={72}>ENG</TrayText>
        <Clock>16:05<br />14/12/2021</Clock>
        <TaskButton $w={80} aria-label="Notifications">
          <svg width="26" height="26" viewBox="0 0 26 26">
            <path d="M1 1h24v17H14v6l-6-6H1z" fill="#fff" />
            <path d="M5 6h16M5 10h16M5 14h10" stroke="#1b292e" strokeWidth="1.500" />
            <path d="M20 12a6 6 0 11-6 9c4 0 7-4 6-9z" fill="#fff" stroke="#1b292e" strokeWidth="1.500" />
          </svg>
        </TaskButton>
        <ShowDesktop aria-label="Show desktop" />
      </Taskbar>
    </Window>
  );
}
